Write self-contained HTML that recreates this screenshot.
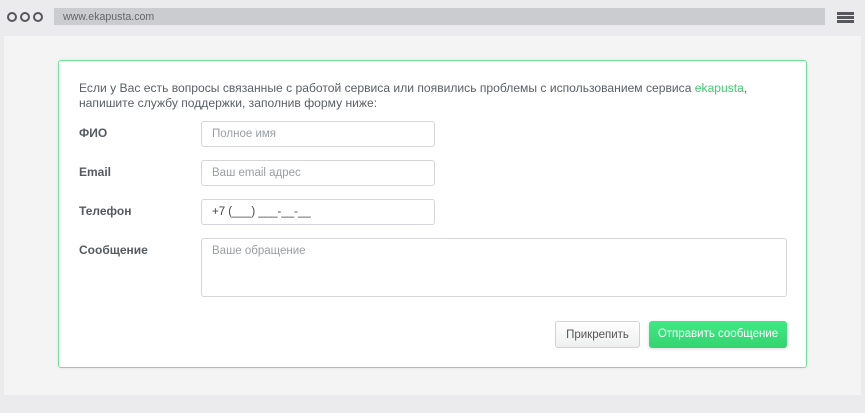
<!DOCTYPE html>
<html><head><meta charset="utf-8"><style>
*{box-sizing:border-box;margin:0;padding:0}
body{width:865px;height:413px;background:#ebebed;font-family:"Liberation Sans",sans-serif;position:relative;overflow:hidden;color:#555a60}
.abs{position:absolute}
.dot{position:absolute;top:12px;width:10px;height:10px;border:2px solid #55575c;border-radius:50%}
.url{left:54px;top:8px;width:771px;height:17px;background:#cbccd0;font-size:10.6px;color:#666;padding:3px 9px}
.burger{left:837px;width:17px;height:2.5px;background:#55575c}
.main{left:4px;top:36px;width:857px;height:359px;background:#f4f4f4}
.card{left:58px;top:60px;width:749px;height:308px;background:#fff;border:1.5px solid #6fe498;border-radius:3px;box-shadow:0 0 3px rgba(0,0,0,.08)}
.txt{left:79px;top:81px;font-size:12.1px;line-height:15px;color:#5a5f66}
.txt span{color:#3ecb6e}
.lbl{left:79px;font-size:12px;font-weight:bold;color:#555a60}
.in{left:201px;width:234px;height:26px;border:1px solid #d4d6d9;border-radius:3px;font-size:11.5px;color:#9a9ea3;padding:6px 10px}
.btn{border-radius:3px;font-size:11.5px;text-align:center;line-height:26px}
</style></head><body>
<div class="dot" style="left:7px"></div><div class="dot" style="left:20px"></div><div class="dot" style="left:33px"></div>
<div class="abs url">www.ekapusta.com</div>
<div class="abs burger" style="top:12px"></div><div class="abs burger" style="top:16px"></div><div class="abs burger" style="top:20px"></div>
<div class="abs main"></div>
<div class="abs card"></div>
<div class="abs txt">Если у Вас есть вопросы связанные с работой сервиса или появились проблемы с использованием сервиса <span>ekapusta</span>,<br>напишите службу поддержки, заполнив форму ниже:</div>
<div class="abs lbl" style="top:126px">ФИО</div>
<div class="abs lbl" style="top:165px">Email</div>
<div class="abs lbl" style="top:204px">Телефон</div>
<div class="abs lbl" style="top:243px">Сообщение</div>
<div class="abs in" style="top:121px">Полное имя</div>
<div class="abs in" style="top:160px">Ваш email адрес</div>
<div class="abs in" style="top:199px;color:#444">+7 (___) ___-__-__</div>
<div class="abs in" style="top:238px;width:586px;height:59px">Ваше обращение</div>
<div class="abs btn" style="left:555px;top:321px;width:85px;height:27px;border:1px solid #d0d2d5;background:linear-gradient(#fff,#eeeff0);color:#555">Прикрепить</div>
<div class="abs btn" style="left:649px;top:321px;width:138px;height:27px;background:linear-gradient(#3fe983,#34d470);color:#fff;box-shadow:0 1px 3px rgba(0,0,0,.15)">Отправить сообщение</div>
</body></html>
